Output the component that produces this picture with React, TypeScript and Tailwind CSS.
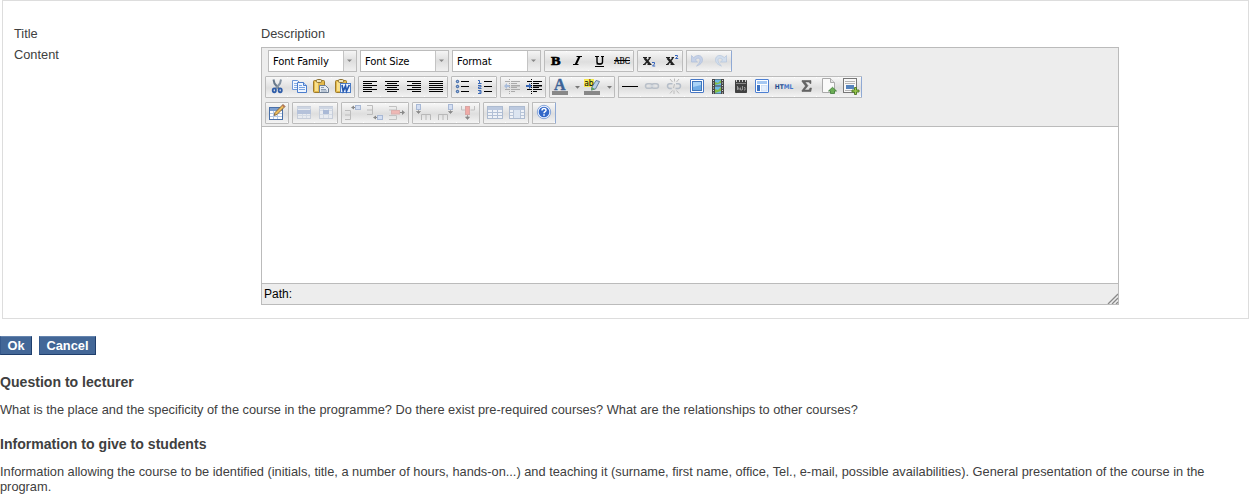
import React from "react";

type Glyph = React.ReactNode;

const Px = ({ d, c, w = 1, o }: { d: string; c: string; w?: number; o?: number }) => (
  <path d={d} stroke={c} strokeWidth={w} fill="none" opacity={o} />
);

const lines = (rows: [number, number, number][], c = "#000") =>
  rows.map(([x, y, w], i) => <rect key={i} x={x} y={y} width={w} height={1} fill={c} />);

const clipboard = (
  <>
    <rect x="3.5" y="3.5" width="11" height="12" rx="1" fill="#e3b94c" stroke="#9c7a2c" />
    <path d="M5 5h3v9H5z" fill="#f8e08c" />
    <rect x="6.5" y="2.5" width="5" height="3" rx="1" fill="#eee4bd" stroke="#8f7435" />
  </>
);

const serif = "'Liberation Serif', serif";

const icons: Record<string, Glyph> = {
  bold: <text x="6" y="14" fontFamily={serif} fontWeight="700" fontSize="13" textLength="9.5" lengthAdjust="spacingAndGlyphs" stroke="#000" strokeWidth=".6">B</text>,
  italic: (
    <>
      <path d="M9.500 5.500h5.500M6 13.500h5.500" stroke="#000" />
      <path d="M12.500 5.500L8.700 13.500" stroke="#000" strokeWidth="2" />
    </>
  ),
  underline: (
    <>
      <path d="M6 5.500h4M12 5.500h3M7.500 13h5" stroke="#000" />
      <path d="M8 5.500v5.500q0 2 2.500 2h.5q2.500 0 2.500-2V5.500" fill="none" stroke="#000" strokeWidth="1.400" />
      <rect x="6" y="15" width="9" height="1" />
    </>
  ),
  strike: (
    <>
      <text x="3" y="13" fontFamily={serif} fontSize="9.500" textLength="16" lengthAdjust="spacingAndGlyphs" stroke="#000" strokeWidth=".2">ABC</text>
      <rect x="3" y="9" width="16" height="1" />
    </>
  ),
  sub: (
    <>
      <Px d="M6.5 7l5.500 6.500" c="#222" w={2.400} />
      <Px d="M12 7l-5.500 6.500" c="#222" w={1.500} />
      <path d="M5 6.500h4M10.500 6.500h2.500M5 13.500h2.500M9.500 13.500h4" stroke="#222" />
      <Px d="M14 11.500h2.500v1.500l-2 2h2.700" c="#3564bd" />
    </>
  ),
  sup: (
    <>
      <Px d="M7.500 7l5.500 6.500" c="#222" w={2.400} />
      <Px d="M13 7l-5.500 6.500" c="#222" w={1.500} />
      <path d="M6 6.500h4M11.500 6.500h2.500M6 13.500h2.500M10.500 13.500h4" stroke="#222" />
      <Px d="M15 4.500h2.500v1.200l-2 1.800h2.700" c="#3564bd" />
    </>
  ),
  undo: (
    <path d="M4.500 4.500v6.500h6L8.300 9C10 6.500 13 6.700 13 9.200c0 2-1.200 3.800-3.500 5.800 4-1.300 6-3.500 6-6.200C15.500 4 10 3 6.700 6.700z" fill="#c5d1e8" stroke="#aebdd9" strokeWidth=".7" />
  ),
  redo: (
    <path d="M17.500 4.500v6.500h-6L13.700 9C12 6.500 9 6.700 9 9.200c0 2 1.200 3.800 3.500 5.800-4-1.300-6-3.500-6-6.200C6.500 4 12 3 15.300 6.700z" fill="#d2deed" stroke="#b4c6dc" strokeWidth=".7" />
  ),
  cut: (
    <>
      <Px d="M7.500 2.500l1 4L13 12" c="#68798b" w={2} />
      <Px d="M15 2.500l-1 4L9.500 12" c="#8493a3" w={2} />
      <ellipse cx="8.300" cy="13.300" rx="1.600" ry="2" fill="none" stroke="#2e5ca8" strokeWidth="1.800" />
      <ellipse cx="14.200" cy="13.300" rx="1.600" ry="2" fill="none" stroke="#2e5ca8" strokeWidth="1.800" />
    </>
  ),
  copy: (
    <>
      <path d="M4.500 3.500h5l3 3v6h-8z" fill="#f3f8ff" stroke="#6d97d7" />
      <Px d="M6 6.500h3M6 8.500h4M6 10.500h4" c="#8ab0e6" />
      <path d="M9.500 5.500h6l3 3v7h-9z" fill="#eef5ff" stroke="#4b7dcc" />
      <path d="M15.500 5.500v3h3" fill="#bdd4f5" stroke="#4b7dcc" />
      <Px d="M11 8.500h3M11 10.500h6M11 12.500h6" c="#78a2e0" />
    </>
  ),
  paste: (
    <>
      {clipboard}
      <path d="M9.500 8.500h6l3 3v4h-9z" fill="#e6edf5" stroke="#6b7d94" />
      <Px d="M11 10.500h3M11 12.500h5M11 14h6" c="#8d9db1" />
    </>
  ),
  pasteword: (
    <>
      {clipboard}
      <rect x="8.500" y="6.500" width="10" height="9" fill="#eaf2ff" stroke="#4d7cc4" />
      <Px d="M10 8l1.200 6 2.300-5 1 5L17.300 8" c="#2458b0" w={1.700} />
    </>
  ),
  left: lines([[4, 4, 14], [4, 6, 9], [4, 8, 14], [4, 10, 9], [4, 12, 14], [4, 14, 9]]),
  center: lines([[4, 4, 14], [6, 6, 10], [4, 8, 14], [6, 10, 10], [4, 12, 14], [6, 14, 10]]),
  right: lines([[4, 4, 14], [9, 6, 9], [4, 8, 14], [9, 10, 9], [4, 12, 14], [9, 14, 9]]),
  full: lines([[4, 4, 14], [4, 6, 14], [4, 8, 14], [4, 10, 14], [4, 12, 14], [4, 14, 14]]),
  bullets: (
    <>
      {lines([[9, 4, 8], [9, 9, 8], [9, 14, 8]])}
      {[4.5, 9.5, 14.5].map((y) => (
        <circle key={y} cx="5.500" cy={y} r="1.200" fill="#9db9e0" stroke="#24549c" strokeWidth="1" />
      ))}
    </>
  ),
  numbers: (
    <>
      {lines([[10, 4, 8], [10, 9, 8], [10, 14, 8]])}
      <Px d="M4 3.500h1.500v3M4 6.500h3.500M4 8.500h3v1.500h-2.500v1.500h3M4 13.500h3v3h-3M5 15h2" c="#3b69b6" />
    </>
  ),
  outdent: (
    <>
      {lines([[4, 4, 4], [10, 4, 9], [10, 6, 6], [10, 12, 9], [4, 12, 4], [10, 14, 4]], "#aaa")}
      <rect x="10" y="8" width="9" height="1.500" fill="#aaa" />
      <rect x="10" y="10" width="6" height="1" fill="#aaa" />
      <path d="M3 9l3-3v2h3v2H6v2z" fill="#a9bddb" />
      <path d="M8.500 2v15" stroke="#aaa" strokeDasharray="1 1" />
    </>
  ),
  indent: (
    <>
      {lines([[4, 4, 4], [10, 4, 9], [10, 6, 6], [10, 12, 9], [4, 12, 4], [10, 14, 4]])}
      <rect x="10" y="8" width="9" height="1.500" />
      <rect x="10" y="10" width="6" height="1" />
      <path d="M9 9l-3-3v2H3v2h3v2z" fill="#3566b5" />
      <path d="M8.500 2v15" stroke="#000" strokeDasharray="1 1" />
    </>
  ),
  color: (
    <>
      <text x="4" y="13" fontFamily={serif} fontWeight="700" fontSize="16" stroke="#3c6397" strokeWidth=".4" fill="#3c6397">A</text>
      <rect x="2" y="14" width="16" height="4" fill="#888" />
    </>
  ),
  highlight: (
    <>
      <rect x="2" y="2" width="10" height="8" fill="#f5e84e" />
      <path d="M14 3.500l3.500 1-4 7.500-4 1 .5-3z" fill="#b8d0e8" stroke="#5d7690" strokeWidth=".9" />
      <path d="M9.500 10l3.500 2-4 1.500z" fill="#60a060" />
      <text x="2.200" y="9" fontFamily="'DejaVu Sans', sans-serif" fontSize="8.500" textLength="9.500" lengthAdjust="spacingAndGlyphs">ab</text>
      <rect x="2" y="14" width="16" height="4" fill="#888" />
    </>
  ),
  hr: <rect x="3" y="9" width="16" height="1" />,
  link: (
    <>
      <rect x="4.500" y="6.700" width="7" height="4.600" rx="2.300" fill="none" stroke="#b9c0c9" strokeWidth="1.500" />
      <rect x="10.500" y="6.700" width="7" height="4.600" rx="2.300" fill="none" stroke="#b9c0c9" strokeWidth="1.500" />
      <Px d="M8.500 9h5" c="#d7dce2" w={1.500} />
    </>
  ),
  unlink: (
    <>
      <path d="M9.500 6.800H6.800a2.300 2.300 0 0 0 0 4.600h2M13 6.800h2.200a2.300 2.300 0 0 1 0 4.600h-2.700" fill="none" stroke="#b5bdc8" strokeWidth="1.500" />
      <Px d="M7 2l2.500 3M11.500 1.500v3M16 2l-2.500 3M7 16.500l2.500-3M11 13.500v3.500M16 16.500l-2.500-3M11.500 7l-1 4" c="#bcbcbc" />
    </>
  ),
  image: (
    <>
      <rect x="5.500" y="2.500" width="13" height="13" rx=".5" fill="#fff" stroke="#4777c4" />
      <rect x="7.500" y="4.500" width="9" height="9" fill="#70ace5" stroke="#3f75ba" />
      <path d="M8 5h8v3L8 10z" fill="#a9d3f7" />
    </>
  ),
  film: (
    <>
      <rect x="5" y="2" width="12" height="15" fill="#474747" />
      <path d="M6.500 3v14M15.500 3v14" stroke="#ddd" strokeDasharray="1 1.500" />
      <rect x="8" y="2.500" width="6" height="6" fill="#6eb8e6" />
      <rect x="8" y="9.500" width="6" height="7" fill="#6eb8e6" />
      <path d="M8 5l3 1 3-3v3L8 8zM8 12l3 1 3-3v4l-6 2z" fill="#83bd46" />
    </>
  ),
  clapper: (
    <>
      <rect x="6" y="3" width="12" height="13" rx=".8" fill="#414141" />
      <path d="M7.500 5V3M10.500 5V3M13.500 5V3M16.500 5V3" stroke="#ccc" />
      <path d="M7 6.500h10" stroke="#888" />
      <Px d="M8.500 9v4M8.500 11h1.500v2M11.500 10.500v2.500h1.500M13.500 9v4M15 10.500h1v2.500h-1" c="#aaa" w={0.8} />
    </>
  ),
  template: (
    <>
      <rect x="4.500" y="2.500" width="13" height="13" rx=".5" fill="#fff" stroke="#4c7fd2" />
      <rect x="6" y="4" width="10" height="3" fill="#a5c8f3" />
      <rect x="6" y="8" width="3" height="6" fill="#3c72c2" />
      <rect x="10.500" y="8.500" width="5.500" height="5.500" fill="#e4effd" stroke="#c4d8f2" strokeWidth=".7" />
    </>
  ),
  html: (
    <text x="1.800" y="11.800" fontFamily="'DejaVu Sans', sans-serif" fontWeight="700" fontSize="6.600" textLength="18.500" lengthAdjust="spacingAndGlyphs">
      <tspan fill="#234b8e">HT</tspan>
      <tspan fill="#4676c9">ML</tspan>
    </text>
  ),
  sigma: (
    <path d="M7 3.500h9v3h-1L14 5h-4l3 3.700L9.500 13h4.500l1-2h1.500l-.6 3.500H7v-1L10.500 9 7 4.500z" fill="#666" stroke="#555" strokeWidth=".5" />
  ),
  page: (
    <>
      <path d="M5.500 1.500h8l4 4v10h-12z" fill="#fafafa" stroke="#aaa" />
      <path d="M13.500 1.500v4h4" fill="#e4e4e4" stroke="#aaa" />
      <path d="M15.500 10.300l4 3.700h-2v2.500h-4V14h-2z" fill="#6cae55" stroke="#3f7b37" strokeWidth=".8" />
    </>
  ),
  insert: (
    <>
      <rect x="4.500" y="1.500" width="13" height="14" fill="#f8f8f8" stroke="#777" />
      <Px d="M6 4.500h10M6 6.500h10M6 13.500h7" c="#b5b5b5" />
      <rect x="7" y="8" width="8" height="4" fill="#5583bd" />
      <path d="M15.500 10.500h2v2.500h2.500v2h-2.500v2.500h-2V15H13v-2h2.500z" fill="#9bc74b" stroke="#4a7625" strokeWidth=".9" />
    </>
  ),
  table: (
    <>
      <rect x="3.500" y="4.500" width="13" height="12" fill="#fff" stroke="#4a70a8" />
      <rect x="4" y="5" width="12" height="3" fill="#7d9fcf" />
      <Px d="M4 10.500h12M4 13.500h12M7.500 8v8M11.500 8v8" c="#b7cae6" />
      <path d="M17 1.500l2 2-8 8-2.800 1 .8-3z" fill="#edbd5d" stroke="#70522c" strokeWidth=".8" />
      <path d="M16 2.500l2 2 1-1L17 1.500z" fill="#b5705a" />
    </>
  ),
  rowprops: (
    <>
      <rect x="4.500" y="3.500" width="13" height="12" fill="#e8ebf0" stroke="#c6cdd9" />
      <rect x="4" y="4" width="14" height="2" fill="#cdd5e2" />
      <Px d="M9.500 11v4M13.500 11v4M5 12.500h12" c="#d3dae4" />
      <rect x="4" y="7" width="14" height="4" fill="#b5c2da" />
    </>
  ),
  cellprops: (
    <>
      <rect x="4.500" y="3.500" width="13" height="12" fill="#e8ebf0" stroke="#c6cdd9" />
      <rect x="4" y="4" width="14" height="2" fill="#cdd5e2" />
      <Px d="M8.500 6v9M13.500 6v9M5 7.500h12M5 11.500h12" c="#d3dae4" />
      <rect x="8" y="7" width="6" height="4" fill="#a9b9d6" />
    </>
  ),
  rowbefore: (
    <>
      <Px d="M3 7.500h5.500v9H3M3 12h5.500" c="#bcbcbc" />
      <path d="M11 4.500h2.500" stroke="#888" />
      <path d="M9 4.500l3-2v4z" fill="#888" />
      <rect x="13.500" y="2.500" width="5" height="4" fill="#d3def2" stroke="#a9b9d5" />
    </>
  ),
  rowafter: (
    <>
      <Px d="M3 2.500h5.500v9H3M3 7h5.500" c="#bcbcbc" />
      <path d="M11 14.500h2.500" stroke="#888" />
      <path d="M9 14.500l3-2v4z" fill="#888" />
      <rect x="13.500" y="12.500" width="5" height="4" fill="#d3def2" stroke="#a9b9d5" />
    </>
  ),
  rowdelete: (
    <>
      <Px d="M3 3.500h7.500v3.500H3M3 16.500h7.500v-4H3" c="#c2c2c2" />
      <rect x="5.500" y="7.500" width="8" height="3.500" fill="#efb8b5" stroke="#dcb0ae" />
      <path d="M14 9.500h3" stroke="#888" />
      <path d="M19 9.500l-3-2.500v5z" fill="#888" />
    </>
  ),
  colbefore: (
    <>
      <rect x="3.500" y="1.500" width="4" height="5" fill="#d3def2" stroke="#a9b9d5" />
      <path d="M5.500 7v2M3.500 8.500h4l-2 2z" stroke="#888" fill="#888" strokeWidth=".7" />
      <Px d="M8.500 17v-5.500h9V17M13 12v5" c="#b8b8b8" />
    </>
  ),
  colafter: (
    <>
      <rect x="13.500" y="1.500" width="4" height="5" fill="#d3def2" stroke="#a9b9d5" />
      <path d="M15.500 7v2M13.500 8.500h4l-2 2z" stroke="#888" fill="#888" strokeWidth=".7" />
      <Px d="M3.500 17v-5.500h9V17M8 12v5" c="#b8b8b8" />
    </>
  ),
  coldelete: (
    <>
      <Px d="M4.500 3v4h4M17.500 3v4h-4" c="#c0c0c0" />
      <rect x="8.500" y="3.500" width="4" height="8" fill="#f0aaa6" stroke="#d8a6a4" />
      <path d="M10.500 12v3M8.500 14h4l-2 2.500z" stroke="#888" fill="#888" strokeWidth=".7" />
    </>
  ),
  split: (
    <>
      <rect x="3.500" y="3.500" width="15" height="12" fill="#eff2f7" stroke="#adbbd0" />
      <rect x="4" y="4" width="14" height="3" fill="#bcc9df" />
      <Px d="M4 9.500h14M4 12.500h14M8.500 7v8M13.500 7v8" c="#b1bfd5" />
    </>
  ),
  merge: (
    <>
      <rect x="3.500" y="3.500" width="15" height="12" fill="#eff2f7" stroke="#adbbd0" />
      <rect x="4" y="4" width="14" height="3" fill="#bcc9df" />
      <Px d="M4 9.500h3M4 12.500h3M7.500 7v8M14.500 7v8M15 9.500h3M15 12.500h3" c="#b8c5d8" />
      <rect x="8" y="7" width="6" height="8" fill="#dce5f1" />
    </>
  ),
  help: (
    <>
      <circle cx="11" cy="9" r="6.700" fill="#eef4ff" stroke="#7c9dd5" strokeWidth=".9" />
      <circle cx="11" cy="9" r="5.300" fill="#3268c9" />
      <Px d="M9 7.500c0-2.500 4-2.500 4-.3 0 1.500-2 1.500-2 3M11 11.300v1.500" c="#fff" w={1.500} />
    </>
  ),
};

const Icon = ({ name }: { name: string }) => (
  <button type="button" aria-label={name} className="block h-5 w-[22px] shrink-0">
    <svg viewBox="0 0 22 20" className="block h-5 w-[22px]">
      <path d="M21 .5h1M21 19.5h1" stroke="#fff" />
      {icons[name]}
    </svg>
  </button>
);

const Caret = () => (
  <svg viewBox="0 0 10 20" className="block h-5 w-2.5 shrink-0">
    <path d="M3 9h5L5.500 11.700z" fill="#777" />
  </svg>
);

const Group = ({ names, split, last }: { names: string[]; split?: boolean; last?: boolean }) => (
  <div
    className={`flex h-[22px] shrink-0 rounded-[1px] border border-[#bcbcbc] bg-linear-to-b from-[#f8f8f8] from-0% via-[#dedede] via-55% to-[#f4f4f4] to-100% ${last ? "border-r-[#8fa9d4]" : ""}`}
  >
    {names.map((n) => (
      <React.Fragment key={n}>
        <Icon name={n} />
        {split && <Caret />}
      </React.Fragment>
    ))}
  </div>
);

const ListBox = ({ label }: { label: string }) => (
  <div className="flex h-[22px] w-[89px] shrink-0 border border-[#bcbcbc] bg-white">
    <span className="w-[74px] pl-1 font-['DejaVu_Sans_Condensed','DejaVu_Sans',sans-serif] text-[11.2px] leading-[22px] tracking-[-0.15px] whitespace-nowrap text-black">
      {label}
    </span>
    <span className="flex w-[13px] justify-center border-l border-[#c4c4c4] bg-linear-to-b from-[#f5f5f5] via-[#dedede] to-[#f0f0f0]">
      <svg viewBox="0 0 12 20" className="h-5 w-3 shrink-0">
        <path d="M3 8.500h5L5.500 11z" fill="#888" />
      </svg>
    </span>
  </div>
);

const Editor = () => (
  <div className="h-[258px] w-[858px] border border-[#bbb]">
    <div className="flex h-[79px] flex-col gap-1 border-b border-[#bbb] bg-[#ededed] pt-0.5 pl-[3px]">
      <div className="flex gap-[3px] pl-[3px]">
        <ListBox label="Font Family" />
        <ListBox label="Font Size" />
        <ListBox label="Format" />
        <Group names={["bold", "italic", "underline", "strike"]} />
        <Group names={["sub", "sup"]} />
        <Group names={["undo", "redo"]} last />
      </div>
      <div className="flex gap-[3px]">
        <Group names={["cut", "copy", "paste", "pasteword"]} />
        <Group names={["left", "center", "right", "full"]} />
        <Group names={["bullets", "numbers"]} />
        <Group names={["outdent", "indent"]} />
        <Group names={["color", "highlight"]} split />
        <Group names={["hr", "link", "unlink", "image", "film", "clapper", "template", "html", "sigma", "page", "insert"]} last />
      </div>
      <div className="flex gap-[3px]">
        <Group names={["table"]} />
        <Group names={["rowprops", "cellprops"]} />
        <Group names={["rowbefore", "rowafter", "rowdelete"]} />
        <Group names={["colbefore", "colafter", "coldelete"]} />
        <Group names={["split", "merge"]} />
        <Group names={["help"]} last />
      </div>
    </div>
    <div className="h-[156px] bg-white" />
    <div className="flex h-[21px] items-end justify-between border-t border-[#bbb] bg-[#ededed]">
      <span className="h-5 pl-0.5 text-[12px] leading-[21px] text-black">Path:</span>
      <svg viewBox="0 0 11 11" className="size-[11px]">
        <path d="M1 11L11 1M5 11L11 5M9 11l2-2" stroke="#888" strokeWidth="1.300" />
      </svg>
    </div>
  </div>
);

const Action = ({ label, size }: { label: string; size: string }) => (
  <button
    type="button"
    className={`${size} h-[19px] border border-t-[#6584ae] border-r-[#1f3e6c] border-b-[#1f3e6c] border-l-[#36598b] bg-[#436797] text-[12.8px] leading-[17px] font-bold text-white`}
  >
    {label}
  </button>
);

export default function App() {
  return (
    <main className="h-[494px] w-[1251px] overflow-hidden bg-white font-['Liberation_Sans',Arial,sans-serif] text-[12.8px] leading-[15px] text-[#404040]">
      <section className="ml-0.5 flex h-[319px] w-[1247px] border border-[#ddd] pt-[25px] pl-[11px]">
        <div className="flex w-[247px] flex-col gap-1.5">
          <span>Title</span>
          <span>Content</span>
        </div>
        <div className="flex flex-col gap-1.5">
          <span>Description</span>
          <Editor />
        </div>
      </section>
      <div className="mt-[17px] flex gap-[7px]">
        <Action label="Ok" size="w-8" />
        <Action label="Cancel" size="w-[57px]" />
      </div>
      <h3 className="mt-[19px] text-[14.08px] leading-4 font-bold">Question to lecturer</h3>
      <p className="mt-3 whitespace-nowrap">
        What is the place and the specificity of the course in the programme? Do there exist pre-required courses? What are the relationships to other courses?
      </p>
      <h3 className="mt-[19px] text-[14.08px] leading-4 font-bold">Information to give to students</h3>
      <p className="mt-3">
        Information allowing the course to be identified (initials, title, a number of hours, hands-on...) and teaching it (surname, first name, office, Tel., e-mail, possible availabilities). General presentation of the course in the
        <br />
        program.
      </p>
    </main>
  );
}
